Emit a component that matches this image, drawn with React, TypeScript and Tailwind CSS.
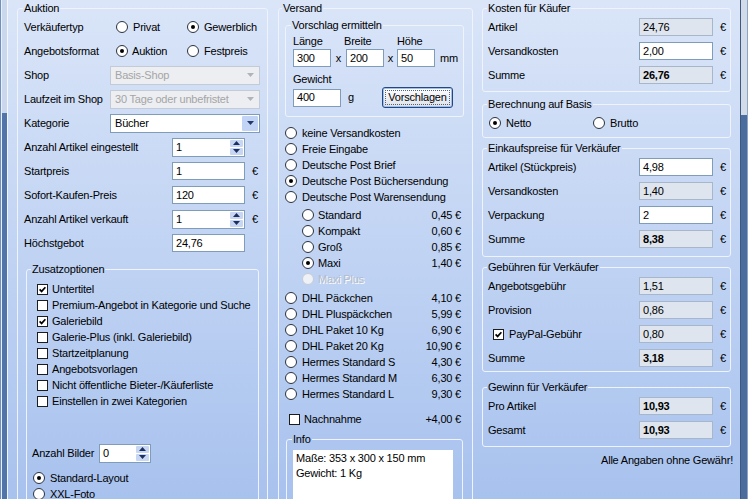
import type { ReactNode } from "react"

function Radio({ checked, disabled }: { checked?: boolean; disabled?: boolean }) {
  return (
    <span
      className={
        disabled
          ? "w-3 h-3 shrink-0 rounded-full border border-[#c6ccd6] bg-[#eef1f5]"
          : "w-3 h-3 shrink-0 rounded-full border border-[#2a323e] bg-white flex items-center justify-center"
      }
    >
      {checked && <span className="w-1 h-1 rounded-full bg-black" />}
    </span>
  )
}

function Check({ checked }: { checked?: boolean }) {
  return (
    <span className="w-[11px] h-[11px] shrink-0 border border-[#1c1c1c] bg-white flex items-center justify-center">
      {checked && (
        <svg width="7" height="7" viewBox="0 0 7 7">
          <path d="M0.6 3.4 L2.6 5.4 L6.4 1.2" stroke="#000" strokeWidth="1.7" fill="none" />
        </svg>
      )}
    </span>
  )
}

function Group({ title, className, children }: { title: string; className: string; children: ReactNode }) {
  return (
    <fieldset className={"border border-[#eef3fc] rounded-[3px] min-w-0 " + className}>
      <legend className="px-px leading-[13px]">{title}</legend>
      {children}
    </fieldset>
  )
}

function Field({ value, className, readOnly, bold }: { value: string; className: string; readOnly?: boolean; bold?: boolean }) {
  return (
    <div
      className={
        (readOnly
          ? "border border-[#a7b6c9] bg-[#dfe5ee] "
          : "border border-[#7f9db9] bg-white ") +
        "h-[18px] flex items-center pl-[3px] " +
        (bold ? "font-bold " : "") +
        className
      }
    >
      {value}
    </div>
  )
}

function Arrow({ up, color }: { up?: boolean; color: string }) {
  return (
    <svg width="7" height="4" viewBox="0 0 7 4">
      <path d={up ? "M0 4 L3.5 0 L7 4 Z" : "M0 0 L7 0 L3.5 4 Z"} fill={color} />
    </svg>
  )
}

function Spin({ value, className }: { value: string; className: string }) {
  return (
    <div className={"h-[19px] border border-[#7f9db9] bg-white flex " + className}>
      <span className="flex-1 pl-[3px] flex items-center">{value}</span>
      <span className="w-[15px] flex flex-col gap-px p-px">
        <span className="flex-1 bg-[#c6d6f3] rounded-[1px] flex items-center justify-center">
          <Arrow up color="#1d2f5e" />
        </span>
        <span className="flex-1 bg-[#c6d6f3] rounded-[1px] flex items-center justify-center">
          <Arrow color="#1d2f5e" />
        </span>
      </span>
    </div>
  )
}

function Select({ value, disabled }: { value: string; disabled?: boolean }) {
  return (
    <div
      className={
        disabled
          ? "w-[150px] h-[19px] border border-[#c3cbd7] bg-[#eceef2] text-[#a5a5a5] flex items-center"
          : "w-[150px] h-[19px] border border-[#7f9db9] bg-white flex items-center"
      }
    >
      <span className="flex-1 pl-[4px]">{value}</span>
      <span
        className={
          disabled
            ? "w-[16px] h-[15px] mr-px flex items-center justify-center"
            : "w-[16px] h-[15px] mr-px bg-[#c2d4f5] rounded-[1px] flex items-center justify-center"
        }
      >
        <Arrow color={disabled ? "#b0b4ba" : "#243866"} />
      </span>
    </div>
  )
}

function InputRow({ label, children, euro }: { label: string; children: ReactNode; euro?: boolean }) {
  return (
    <div className="flex items-center h-6 pl-px">
      <span className="w-[148px]">{label}</span>
      {children}
      {euro && <span className="ml-[7px]">€</span>}
    </div>
  )
}

function PriceRow({ label, value, checked, disabled }: { label: string; value?: string; checked?: boolean; disabled?: boolean }) {
  return (
    <div className="flex items-center h-4 pl-[3px] pr-[8px]">
      <Radio checked={checked} disabled={disabled} />
      <span className={disabled ? "ml-[5px] text-[#b3bccb] [text-shadow:1px_1px_0_#ffffff]" : "ml-[5px]"}>{label}</span>
      <span className="flex-1 text-right">{value}</span>
    </div>
  )
}

function SubRow({ label, value, checked, disabled }: { label: string; value?: string; checked?: boolean; disabled?: boolean }) {
  return (
    <div className="flex items-center h-4 pl-[20px] pr-[8px]">
      <Radio checked={checked} disabled={disabled} />
      <span className={disabled ? "ml-[4px] text-[#b3bccb] [text-shadow:1px_1px_0_#ffffff]" : "ml-[4px]"}>{label}</span>
      <span className="flex-1 text-right">{value}</span>
    </div>
  )
}

function MoneyRow({ label, value, readOnly, bold, children }: { label?: string; value: string; readOnly?: boolean; bold?: boolean; children?: ReactNode }) {
  return (
    <div className="flex items-center h-6 pl-px">
      <div className="w-[151px] flex items-center">{children ?? label}</div>
      <Field value={value} readOnly={readOnly} bold={bold} className="w-[74px]" />
      <span className="ml-[7px]">€</span>
    </div>
  )
}

function CheckRow({ label, checked }: { label: string; checked?: boolean }) {
  return (
    <div className="flex items-center h-4 pl-[6px] gap-[4px]">
      <Check checked={checked} />
      <span>{label}</span>
    </div>
  )
}

export default function App() {
  return (
    <div className="w-[748px] h-[499px] overflow-hidden flex bg-linear-to-b from-[#dae5f8] to-[#a8c2ee] text-[11px] text-black font-['Liberation_Sans',Arial,sans-serif] tracking-[-0.2px] leading-[13px]">
      {/* left window edge */}
      <div className="w-[8px] h-full flex shrink-0">
        <div className="w-px bg-[#7290bd]" />
        <div className="w-px bg-[#e9eff8]" />
        <div className="w-[5px] flex flex-col">
          <div className="h-[113px] bg-[#cad7ec]" />
          <div className="flex-1 bg-[#5175a9]" />
        </div>
        <div className="w-px bg-[#f3f6fc]" />
      </div>

      <div className="flex-1 flex items-start pl-[9px] pr-[9px] pt-[2px]">
        {/* Auktion */}
        <Group title="Auktion" className="w-[251px] pl-[5px] pr-[4px] pb-[20px] shrink-0">
          <div className="flex items-center h-6 pl-px">
            <span className="w-[92px]">Verkäufertyp</span>
            <span className="flex items-center gap-[5px] w-[71px]"><Radio />Privat</span>
            <span className="flex items-center gap-[5px]"><Radio checked />Gewerblich</span>
          </div>
          <div className="flex items-center h-6 pl-px">
            <span className="w-[92px]">Angebotsformat</span>
            <span className="flex items-center gap-[4px] w-[71px]"><Radio checked />Auktion</span>
            <span className="flex items-center gap-[5px]"><Radio />Festpreis</span>
          </div>
          <div className="flex items-center h-6 pl-px">
            <span className="w-[86px]">Shop</span>
            <Select value="Basis-Shop" disabled />
          </div>
          <div className="flex items-center h-6 pl-px">
            <span className="w-[86px]">Laufzeit im Shop</span>
            <Select value="30 Tage oder unbefristet" disabled />
          </div>
          <div className="flex items-center h-6 pl-px">
            <span className="w-[86px]">Kategorie</span>
            <Select value="Bücher" />
          </div>
          <InputRow label="Anzahl Artikel eingestellt">
            <Spin value="1" className="w-[73px]" />
          </InputRow>
          <InputRow label="Startpreis" euro>
            <Field value="1" className="w-[73px]" />
          </InputRow>
          <InputRow label="Sofort-Kaufen-Preis" euro>
            <Field value="120" className="w-[73px]" />
          </InputRow>
          <InputRow label="Anzahl Artikel verkauft" euro>
            <Spin value="1" className="w-[73px]" />
          </InputRow>
          <InputRow label="Höchstgebot">
            <Field value="24,76" className="w-[73px]" />
          </InputRow>

          <Group title="Zusatzoptionen" className="w-[233px] ml-[3px] mt-[8px] pl-[4px] pb-[10px]">
            <div className="mt-[5px]">
              <CheckRow label="Untertitel" checked />
              <CheckRow label="Premium-Angebot in Kategorie und Suche" />
              <CheckRow label="Galeriebild" checked />
              <CheckRow label="Galerie-Plus (inkl. Galeriebild)" />
              <CheckRow label="Startzeitplanung" />
              <CheckRow label="Angebotsvorlagen" />
              <CheckRow label="Nicht öffentliche Bieter-/Käuferliste" />
              <CheckRow label="Einstellen in zwei Kategorien" />
            </div>
            <div className="flex items-center h-5 mt-[34px] pl-px">
              <span className="w-[67px]">Anzahl Bilder</span>
              <Spin value="0" className="w-[52px]" />
            </div>
            <div className="flex items-center h-4 mt-[7px] pl-[2px] gap-[5px]">
              <Radio checked />
              <span>Standard-Layout</span>
            </div>
            <div className="flex items-center h-4 pl-[2px] gap-[5px]">
              <Radio />
              <span>XXL-Foto</span>
            </div>
          </Group>
        </Group>

        {/* Versand */}
        <Group title="Versand" className="w-[195px] ml-[10px] pl-[3px] pr-[3px] pb-[20px] shrink-0">
          <Group title="Vorschlag ermitteln" className="w-[179px] ml-[3px] mt-[4px] pl-[5px] pb-[8px]">
            <div className="pl-[2px]">
              <div className="flex h-[14px] mt-[3px]">
                <span className="w-[51px]">Länge</span>
                <span className="w-[53px]">Breite</span>
                <span>Höhe</span>
              </div>
              <div className="flex items-center h-[18px]">
                <Field value="300" className="w-[38px]" />
                <span className="w-[15px] text-center">x</span>
                <Field value="200" className="w-[38px]" />
                <span className="w-[13px] text-center">x</span>
                <Field value="50" className="w-[38px]" />
                <span className="ml-[5px]">mm</span>
              </div>
              <div className="h-[14px] mt-[6px]">Gewicht</div>
              <div className="flex items-center h-[21px]">
                <Field value="400" className="w-[48px]" />
                <span className="ml-[7px] w-[34px]">g</span>
                <div className="w-[71px] h-[21px] rounded-[3px] border border-[#24477f] bg-linear-to-b from-white to-[#dce1ea] p-[2px] shadow-[inset_0_0_0_1px_#9fc0ec]">
                  <div className="h-full border border-dotted border-[#5a6270] flex items-center justify-center">
                    Vorschlagen
                  </div>
                </div>
              </div>
            </div>
          </Group>

          <div className="mt-[8px]">
            <PriceRow label="keine Versandkosten" />
            <PriceRow label="Freie Eingabe" />
            <PriceRow label="Deutsche Post Brief" />
            <PriceRow label="Deutsche Post Büchersendung" checked />
            <PriceRow label="Deutsche Post Warensendung" />
          </div>
          <div className="mt-[2px]">
            <SubRow label="Standard" value="0,45 €" />
            <SubRow label="Kompakt" value="0,60 €" />
            <SubRow label="Groß" value="0,85 €" />
            <SubRow label="Maxi" value="1,40 €" checked />
            <SubRow label="Maxi Plus" disabled />
          </div>
          <div className="mt-[3px]">
            <PriceRow label="DHL Päckchen" value="4,10 €" />
            <PriceRow label="DHL Pluspäckchen" value="5,99 €" />
            <PriceRow label="DHL Paket 10 Kg" value="6,90 €" />
            <PriceRow label="DHL Paket 20 Kg" value="10,90 €" />
            <PriceRow label="Hermes Standard S" value="4,30 €" />
            <PriceRow label="Hermes Standard M" value="6,30 €" />
            <PriceRow label="Hermes Standard L" value="9,30 €" />
          </div>
          <div className="flex items-center h-4 mt-[9px] pl-[7px] pr-[8px] gap-[4px]">
            <Check />
            <span>Nachnahme</span>
            <span className="flex-1 text-right">+4,00 €</span>
          </div>

          <Group title="Info" className="w-[177px] ml-[4px] mt-[6px] pl-[5px] pb-[10px]">
            <div className="mt-[4px] ml-px w-[160px] h-[70px] bg-white pl-[3px] pt-px leading-[15px]">
              <div>Maße: 353 x 300 x 150 mm</div>
              <div>Gewicht: 1 Kg</div>
            </div>
          </Group>
        </Group>

        {/* right column */}
        <div className="w-[249px] ml-[9px] shrink-0 flex flex-col">
          <Group title="Kosten für Käufer" className="pl-[4px] pb-[4px]">
            <MoneyRow label="Artikel" value="24,76" readOnly />
            <MoneyRow label="Versandkosten" value="2,00" />
            <MoneyRow label="Summe" value="26,76" readOnly bold />
          </Group>

          <Group title="Berechnung auf Basis" className="mt-[6px] pl-[4px] pb-[6px]">
            <div className="flex items-center h-4 mt-[4px] pl-[2px]">
              <span className="w-[104px] flex items-center gap-[5px]"><Radio checked />Netto</span>
              <span className="flex items-center gap-[5px]"><Radio />Brutto</span>
            </div>
          </Group>

          <Group title="Einkaufspreise für Verkäufer" className="mt-[4px] pl-[4px] pb-[5px]">
            <MoneyRow label="Artikel (Stückpreis)" value="4,98" />
            <MoneyRow label="Versandkosten" value="1,40" readOnly />
            <MoneyRow label="Verpackung" value="2" />
            <MoneyRow label="Summe" value="8,38" readOnly bold />
          </Group>

          <Group title="Gebühren für Verkäufer" className="mt-[4px] pl-[4px] pb-px">
            <MoneyRow label="Angebotsgebühr" value="1,51" readOnly />
            <MoneyRow label="Provision" value="0,86" readOnly />
            <MoneyRow value="0,80" readOnly>
              <span className="flex items-center gap-[5px] pl-[5px]">
                <Check checked />
                PayPal-Gebühr
              </span>
            </MoneyRow>
            <MoneyRow label="Summe" value="3,18" readOnly bold />
          </Group>

          <Group title="Gewinn für Verkäufer" className="mt-[9px] pl-[4px] pb-[4px]">
            <MoneyRow label="Pro Artikel" value="10,93" readOnly bold />
            <MoneyRow label="Gesamt" value="10,93" readOnly bold />
          </Group>

          <div className="mt-[7px] -mr-[2px] text-right">Alle Angaben ohne Gewähr!</div>
        </div>
      </div>

      {/* right window edge */}
      <div className="w-[8px] h-full flex shrink-0">
        <div className="w-px bg-[#3e587f]" />
        <div className="w-[6px] flex flex-col">
          <div className="h-[115px] bg-[#d2dbe8]" />
          <div className="flex-1 bg-[#4b6d9e]" />
        </div>
        <div className="w-px bg-[#8ea4c4]" />
      </div>
    </div>
  )
}
